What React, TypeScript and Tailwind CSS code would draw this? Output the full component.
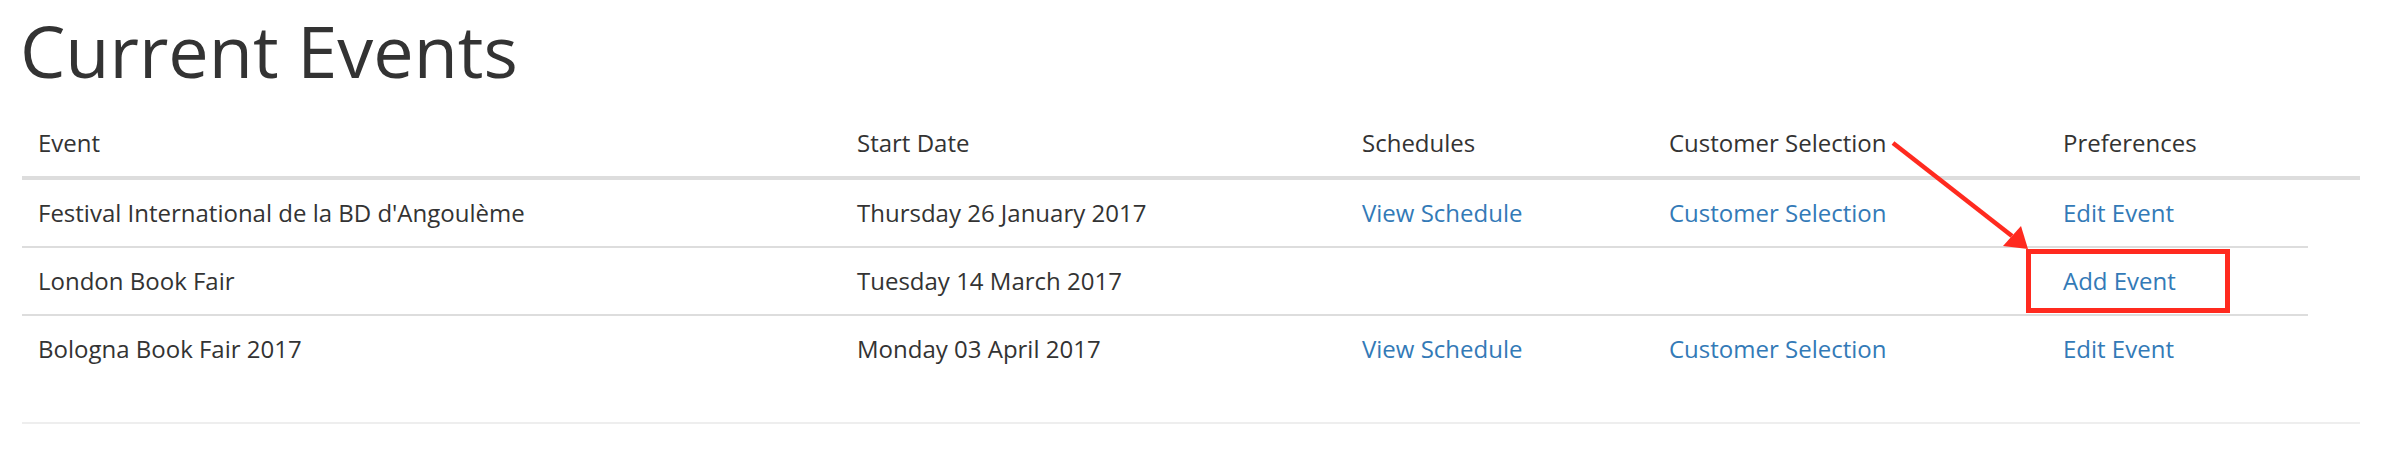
import React from "react";

const rows = [
  {
    name: "Festival International de la BD d'Angoulème",
    date: "Thursday 26 January 2017",
    schedule: true,
    customer: true,
    pref: "Edit Event",
  },
  {
    name: "London Book Fair",
    date: "Tuesday 14 March 2017",
    schedule: false,
    customer: false,
    pref: "Add Event",
    highlight: true,
  },
  {
    name: "Bologna Book Fair 2017",
    date: "Monday 03 April 2017",
    schedule: true,
    customer: true,
    pref: "Edit Event",
  },
];

const cols = "grid grid-cols-[819px_505px_307px_394px_1fr]";
const cell = "px-[16px] py-[16px] leading-[34px] whitespace-nowrap";
const link = "text-[#337ab7]";

export default function App() {
  return (
    <div
      className="relative w-[2384px] h-[462px] bg-white text-[#333333] overflow-hidden"
      style={{ fontFamily: '"Open Sans", "Liberation Sans", sans-serif' }}
    >
      <div className="pt-[10px] pl-[22px] pr-[24px]">
        <h1 className="text-[72px] leading-[80px] font-normal -ml-[2px] mb-[20px] text-[#333333]">
          Current Events
        </h1>

        <div className="text-[24px]">
          <div className={`${cols} border-b-[4px] border-[#dddddd]`}>
            <div className={cell}>Event</div>
            <div className={cell}>Start Date</div>
            <div className={cell}>Schedules</div>
            <div className={cell}>Customer Selection</div>
            <div className={cell}>Preferences</div>
          </div>

          <div className="mr-[52px]">
            {rows.map((r, i) => (
              <div
                key={i}
                className={`${cols} ${i < rows.length - 1 ? "border-b-[2px] border-[#dddddd]" : ""}`}
              >
                <div className={cell}>{r.name}</div>
                <div className={cell}>{r.date}</div>
                <div className={cell}>
                  {r.schedule ? <span className={link}>View Schedule</span> : null}
                </div>
                <div className={cell}>
                  {r.customer ? <span className={link}>Customer Selection</span> : null}
                </div>
                <div className={`${cell} relative`}>
                  <span className={link}>{r.pref}</span>
                  {r.highlight ? (
                    <div className="absolute left-[-21px] top-[1px] w-[204px] h-[64px] border-[5px] border-[#ff2a1f]" />
                  ) : null}
                </div>
              </div>
            ))}
          </div>

          <div className="mt-[40px] border-t-[2px] border-[#eeeeee]" />
        </div>
      </div>

      <svg
        className="absolute left-[1885px] top-[135px] pointer-events-none"
        width="150"
        height="120"
        viewBox="0 0 150 120"
      >
        <line x1="8" y1="8" x2="127" y2="101" stroke="#ff2a1f" strokeWidth="4.5" />
        <polygon points="143,114 118,111 136,91" fill="#ff2a1f" />
      </svg>
    </div>
  );
}
